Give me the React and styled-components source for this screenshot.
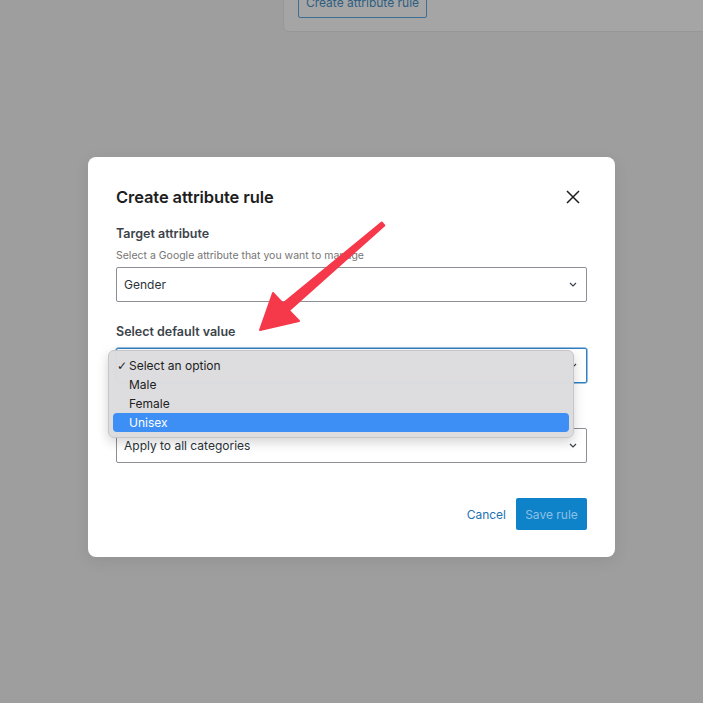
import React from 'react'
import styled, { createGlobalStyle } from 'styled-components'

const GlobalStyle = createGlobalStyle`
  html, body {
    margin: 0;
    padding: 0;
    background: #9e9e9e;
    font-family: Inter, "Noto Sans", sans-serif;
    overflow: hidden;
  }
`

const Page = styled.div`
  width: 703px;
  height: 703px;
  position: relative;
  overflow: hidden;
`

const BackCard = styled.div`
  margin: -40px -20px 0 283px;
  height: 72px;
  background: #a5a5a5;
  border: 1px solid #979797;
  border-radius: 6px;
  padding: 0 14px 13px;
  display: flex;
  align-items: flex-end;
  box-sizing: border-box;
`

const GhostButton = styled.div`
  width: 129px;
  height: 58px;
  border: 1px solid #3a6f93;
  border-radius: 2px;
  box-sizing: border-box;
  display: flex;
  align-items: flex-end;
  justify-content: center;
  padding-bottom: 7px;
  color: #2e5f82;
  font-size: 12px;
`

const Backdrop = styled.div`
  position: absolute;
  inset: 0;
  display: flex;
  justify-content: center;
  align-items: flex-start;
  padding-top: 157px;
`

const Modal = styled.div`
  width: 527px;
  height: 400px;
  box-sizing: border-box;
  background: #fff;
  border-radius: 8px;
  padding: 28px 28px 27px;
  display: flex;
  flex-direction: column;
  box-shadow: 0 4px 16px rgba(0, 0, 0, 0.08);
`

const Header = styled.div`
  display: flex;
  justify-content: space-between;
  align-items: center;
  height: 24px;
  margin-bottom: 16px;
`

const Title = styled.h1`
  margin: 0;
  font-size: 16.5px;
  font-weight: 600;
  color: #1e1e1e;
  letter-spacing: -0.1px;
`

const CloseButton = styled.button`
  border: 0;
  background: none;
  padding: 0;
  width: 16px;
  height: 16px;
  margin-right: 6px;
  display: flex;
`

const Field = styled.div`
  display: flex;
  flex-direction: column;
  margin-bottom: ${p => p.$gap}px;
  position: relative;
`

const Label = styled.label`
  font-size: 12.5px;
  font-weight: 600;
  color: #3c434a;
  line-height: 18px;
  margin-bottom: ${p => (p.$help ? 5 : 7)}px;
`

const Help = styled.div`
  font-size: 10.5px;
  color: #757575;
  line-height: 16px;
  margin-bottom: 3px;
`

const Select = styled.div`
  height: 35px;
  box-sizing: border-box;
  border: 1px solid ${p => (p.$focus ? '#2f7fc1' : '#8c8f94')};
  box-shadow: ${p => (p.$focus ? '0 0 0 0.5px #2f7fc1' : 'none')};
  border-radius: 2px;
  display: flex;
  align-items: center;
  justify-content: space-between;
  padding: 0 9px 0 7px;
  font-size: 12px;
  color: #2c3338;
`

const Menu = styled.div`
  position: absolute;
  z-index: 2;
  left: -8px;
  right: 13px;
  top: 27px;
  height: 88px;
  box-sizing: border-box;
  background: rgba(220, 220, 222, 0.98);
  border: 1px solid #c6c6c8;
  border-radius: 6px;
  box-shadow: 0 4px 12px rgba(0, 0, 0, 0.18);
  padding: 5px 4px;
  display: flex;
  flex-direction: column;
`

const Option = styled.div`
  height: 19px;
  display: flex;
  align-items: center;
  border-radius: 4px;
  padding-left: 16px;
  position: relative;
  font-size: 12px;
  color: ${p => (p.$active ? '#fff' : '#222')};
  background: ${p => (p.$active ? '#3d8ff6' : 'transparent')};
`

const Check = styled.span`
  position: absolute;
  left: 4px;
  font-size: 12px;
  font-weight: 700;
  font-family: "DejaVu Sans", sans-serif;
`

const Footer = styled.div`
  margin-top: auto;
  display: flex;
  justify-content: flex-end;
  align-items: center;
  gap: 10px;
`

const LinkButton = styled.button`
  border: 0;
  background: none;
  padding: 0;
  font-family: inherit;
  font-size: 12px;
  color: #2271b1;
`

const PrimaryButton = styled.button`
  width: 71px;
  height: 32px;
  border: 0;
  border-radius: 2px;
  background: #0f83c9;
  color: #8dc0e4;
  font-family: inherit;
  font-size: 12px;
`

const Annotation = styled.svg`
  position: absolute;
  left: 0;
  top: 0;
  pointer-events: none;
`

const Chevron = () => (
  <svg width="8" height="5" viewBox="0 0 8 5">
    <path d="M1 1 L4 4 L7 1" fill="none" stroke="#3c434a" strokeWidth="1.2" />
  </svg>
)

export default function App() {
  return (
    <Page>
      <GlobalStyle />
      <BackCard>
        <GhostButton>Create attribute rule</GhostButton>
      </BackCard>
      <Backdrop>
        <Modal>
          <Header>
            <Title>Create attribute rule</Title>
            <CloseButton aria-label="Close">
              <svg width="16" height="16" viewBox="0 0 16 16">
                <path d="M2 2 L14 14 M14 2 L2 14" stroke="#1e1e1e" strokeWidth="1.5" />
              </svg>
            </CloseButton>
          </Header>

          <Field $gap={21}>
            <Label $help>Target attribute</Label>
            <Help>Select a Google attribute that you want to manage</Help>
            <Select>
              Gender
              <Chevron />
            </Select>
          </Field>

          <Field $gap={45}>
            <Label>Select default value</Label>
            <Select $focus>
              <span />
              <Chevron />
            </Select>
            <Menu>
              <Option>
                <Check>✓</Check>Select an option
              </Option>
              <Option>Male</Option>
              <Option>Female</Option>
              <Option $active>Unisex</Option>
            </Menu>
          </Field>

          <Field $gap={0}>
            <Select>
              Apply to all categories
              <Chevron />
            </Select>
          </Field>

          <Footer>
            <LinkButton>Cancel</LinkButton>
            <PrimaryButton>Save rule</PrimaryButton>
          </Footer>
        </Modal>
      </Backdrop>
      <Annotation width="703" height="703" viewBox="0 0 703 703">
        <polygon
          points="381.7,222.5 283.1,303.6 273,293 260,330 299,321 288.9,310.4 384.3,225.5"
          fill="#f5384a"
          stroke="#f5384a"
          strokeWidth="2"
          strokeLinejoin="round"
        />
      </Annotation>
    </Page>
  )
}
